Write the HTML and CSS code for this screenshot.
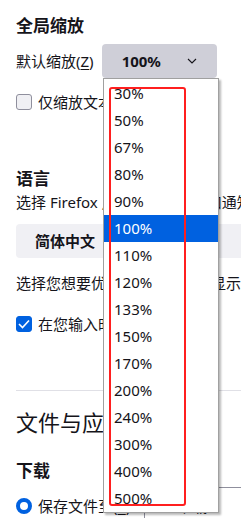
FILE: index.html
```html
<!DOCTYPE html>
<html>
<head>
  <title>常规 - 设置</title>
  <link rel="stylesheet" href="styles.css">
</head>
<body>
  <div class="pane">
    <h2 class="subcat-title">全局缩放</h2>
    <div class="zoom-row">
      <span class="field-label">默认缩放(<u>Z</u>)</span>
      <div class="menulist open">
        <span>100%</span>
        <svg class="chevron" width="10" height="6" viewBox="0 0 10 6"><path d="M1 1l4 4 4-4" fill="none" stroke="#15141a" stroke-width="1.1"/></svg>
      </div>
    </div>
    <div class="check-row">
      <span class="checkbox"></span>
      <span>仅缩放文本</span>
    </div>

    <h2 class="subcat-title lang-title">语言</h2>
    <p class="desc">选择 Firefox 用于菜单、消息和通知的语言</p>
    <div class="menulist lang-list">
      <span>简体中文</span>
      <svg class="chevron" width="10" height="6" viewBox="0 0 10 6"><path d="M1 1l4 4 4-4" fill="none" stroke="#15141a" stroke-width="1.1"/></svg>
    </div>
    <p class="desc desc-pages">选择您想要优先使用的语言来显示网页</p>
    <div class="check-row check-spell">
      <span class="checkbox checked">
        <svg width="12" height="10" viewBox="0 0 12 10"><path d="M1 5l3.5 3.5L11 1.5" fill="none" stroke="#fff" stroke-width="1.6"/></svg>
      </span>
      <span>在您输入时检查拼写</span>
    </div>

    <hr class="divider">

    <h1 class="cat-title">文件与应用程序</h1>
    <h2 class="subcat-title dl-title">下载</h2>
    <div class="radio-row">
      <span class="radio"></span>
      <span class="radio-label">保存文件至(<u>S</u>)</span>
      <div class="folder-field">
        <svg width="14" height="14" viewBox="0 0 14 14"><path d="M7 1v8M3.5 6L7 9.5 10.5 6" fill="none" stroke="#0061e0" stroke-width="2"/></svg>
        <span>下载</span>
      </div>
    </div>
  </div>

  <!-- the opened zoom menulist popup -->
  <div class="zoom-popup">
    <div class="popup-item">30%</div>
    <div class="popup-item">50%</div>
    <div class="popup-item">67%</div>
    <div class="popup-item">80%</div>
    <div class="popup-item">90%</div>
    <div class="popup-item selected">100%</div>
    <div class="popup-item">110%</div>
    <div class="popup-item">120%</div>
    <div class="popup-item">133%</div>
    <div class="popup-item">150%</div>
    <div class="popup-item">170%</div>
    <div class="popup-item">200%</div>
    <div class="popup-item">240%</div>
    <div class="popup-item">300%</div>
    <div class="popup-item">400%</div>
    <div class="popup-item">500%</div>
  </div>

  <!-- red highlight box -->
  <div class="annotation"></div>
</body>
</html>
```

FILE: styles.css
```css
html, body {
  overflow: hidden;
}

body {
  margin: 0;
  background: #FFFFFF;
  color: #15141a;
  font-family: "Noto Sans", "Noto Sans CJK SC", sans-serif;
  font-size: 15px;
  line-height: 22px;
}

.pane {
  padding-left: 16px;
  width: 400px;
}

u {
  text-decoration-thickness: 1px;
  text-underline-offset: 2px;
}

.subcat-title {
  font-size: 17px;
  font-weight: 700;
  line-height: 24px;
  margin: 14px 0 0;
}

.zoom-row {
  display: flex;
  align-items: center;
  gap: 8px;
  margin-top: 6px;
}

.field-label {
  white-space: nowrap;
}

.menulist {
  display: flex;
  align-items: center;
  justify-content: space-between;
  box-sizing: border-box;
  height: 34px;
  border-radius: 4px;
  font-weight: 700;
  white-space: nowrap;
}

.menulist.open {
  width: 115px;
  padding: 0 20px 0 20px;
  background: #cfcfd8;
}

.chevron {
  flex-shrink: 0;
}

.check-row {
  display: flex;
  align-items: center;
  gap: 6px;
  margin-top: 16px;
  height: 16px;
  white-space: nowrap;
}

.checkbox {
  display: flex;
  align-items: center;
  justify-content: center;
  box-sizing: border-box;
  width: 16px;
  height: 16px;
  border: 1px solid #8f8f9d;
  border-radius: 3px;
  background: #f0f0f4;
  flex-shrink: 0;
}

.checkbox.checked {
  border-color: #0061e0;
  background: #0061e0;
}

.lang-title {
  margin-top: 57px;
}

.desc {
  margin: 0;
  white-space: nowrap;
}

.lang-list {
  width: 300px;
  margin-top: 11px;
  padding: 0 20px 0 19px;
  background: #f0f0f4;
}

.desc-pages {
  margin-top: 14px;
}

.check-spell {
  margin-top: 22px;
}

.divider {
  border: none;
  border-top: 1px solid #e0e0e6;
  margin: 58px 0 0;
}

.cat-title {
  font-size: 22px;
  font-weight: 400;
  line-height: 30px;
  margin: 16px 0 0;
  white-space: nowrap;
}

.dl-title {
  margin-top: 22px;
}

.radio-row {
  display: flex;
  align-items: center;
  margin-top: 4px;
  height: 38px;
  white-space: nowrap;
}

.radio {
  box-sizing: border-box;
  width: 16px;
  height: 16px;
  border: 4px solid #0061e0;
  border-radius: 50%;
  background: #FFFFFF;
  flex-shrink: 0;
}

.radio-label {
  margin-left: 6px;
}

.folder-field {
  display: flex;
  align-items: center;
  gap: 8px;
  box-sizing: border-box;
  margin-left: 14px;
  width: 200px;
  height: 38px;
  padding-left: 10px;
  border: 1px solid #8f8f9d;
  border-radius: 4px;
}

/* popup of the opened zoom list */
.zoom-popup {
  position: absolute;
  left: 103px;
  top: 78px;
  width: 116px;
  box-sizing: border-box;
  padding-top: 1px;
  background: #FFFFFF;
  border: 1px solid #a0a0a0;
  box-shadow: 2px 2px 2px rgba(0, 0, 0, 0.28);
  font-size: 15px;
}

.popup-item {
  height: 27px;
  line-height: 27px;
  padding-left: 10px;
  color: #15141a;
}

.popup-item.selected {
  background: #0061e0;
  color: #FFFFFF;
}

.annotation {
  position: absolute;
  left: 109px;
  top: 87px;
  width: 77px;
  height: 419px;
  box-sizing: border-box;
  border: 2.5px solid #ff1f1f;
  border-radius: 3px;
  pointer-events: none;
}
```
